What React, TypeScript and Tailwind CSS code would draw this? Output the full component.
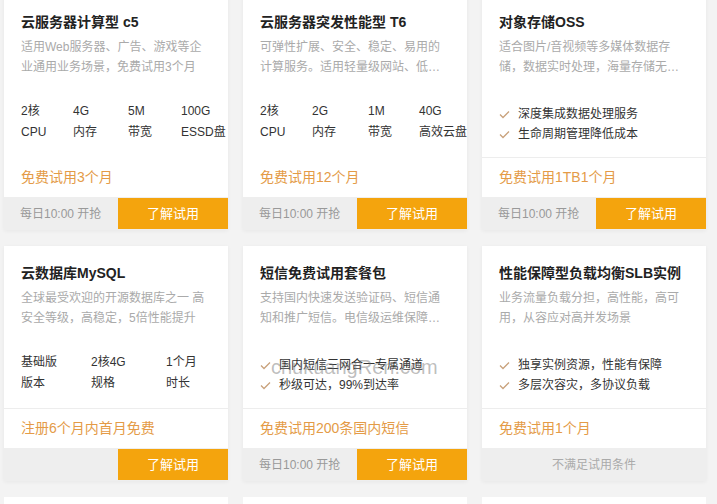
import React from "react";

type Spec = { v: string; l: string; w?: string };
type Card = {
  title: string;
  desc: string;
  specs?: Spec[];
  checks?: string[];
  promo: string;
  divider: boolean;
  footer: "daily" | "button" | "disabled";
};

const cards: Card[] = [
  {
    title: "云服务器计算型 c5",
    desc: "适用Web服务器、广告、游戏等企业通用业务场景，免费试用3个月",
    specs: [
      { v: "2核", l: "CPU", w: "w-[52px]" },
      { v: "4G", l: "内存", w: "w-[55px]" },
      { v: "5M", l: "带宽", w: "w-[53px]" },
      { v: "100G", l: "ESSD盘" },
    ],
    promo: "免费试用3个月",
    divider: false,
    footer: "daily",
  },
  {
    title: "云服务器突发性能型 T6",
    desc: "可弹性扩展、安全、稳定、易用的计算服务。适用轻量级网站、低负载应用场景",
    specs: [
      { v: "2核", l: "CPU", w: "w-[52px]" },
      { v: "2G", l: "内存", w: "w-[56px]" },
      { v: "1M", l: "带宽", w: "w-[51px]" },
      { v: "40G", l: "高效云盘" },
    ],
    promo: "免费试用12个月",
    divider: false,
    footer: "daily",
  },
  {
    title: "对象存储OSS",
    desc: "适合图片/音视频等多媒体数据存储，数据实时处理，海量存储无上限",
    checks: ["深度集成数据处理服务", "生命周期管理降低成本"],
    promo: "免费试用1TB1个月",
    divider: true,
    footer: "daily",
  },
  {
    title: "云数据库MySQL",
    desc: "全球最受欢迎的开源数据库之一 高安全等级，高稳定，5倍性能提升",
    specs: [
      { v: "基础版", l: "版本", w: "w-[70px]" },
      { v: "2核4G", l: "规格", w: "w-[75px]" },
      { v: "1个月", l: "时长" },
    ],
    promo: "注册6个月内首月免费",
    divider: true,
    footer: "button",
  },
  {
    title: "短信免费试用套餐包",
    desc: "支持国内快速发送验证码、短信通知和推广短信。电信级运维保障，实时监控",
    checks: ["国内短信三网合一专属通道", "秒级可达，99%到达率"],
    promo: "免费试用200条国内短信",
    divider: true,
    footer: "daily",
  },
  {
    title: "性能保障型负载均衡SLB实例",
    desc: "业务流量负载分担，高性能，高可用，从容应对高并发场景",
    checks: ["独享实例资源，性能有保障", "多层次容灾，多协议负载"],
    promo: "免费试用1个月",
    divider: true,
    footer: "disabled",
  },
];

function Check() {
  return (
    <svg width="11" height="9" viewBox="0 0 11 9" className="shrink-0">
      <polyline
        points="1,4.5 4,7.5 10,1.5"
        fill="none"
        stroke="#c9a27c"
        strokeWidth="1.3"
      />
    </svg>
  );
}

function CardView({ c }: { c: Card }) {
  return (
    <div className="flex h-[235px] flex-col shadow-[0_1px_4px_rgba(0,0,0,0.05)]">
      <div className="flex-1 bg-white">
        <div className="px-[17px] pt-[17px]">
          <div className="h-[20px] text-[14px] font-bold leading-[20px] text-[#222] whitespace-nowrap">
            {c.title}
          </div>
          <div className="mt-[5px] h-[40px] w-[185px] overflow-hidden text-[12px] leading-[20px] text-[#aaa] line-clamp-2">
            {c.desc}
          </div>
          <div className="mt-[24px] h-[42px]">
            {c.specs && (
              <div className="flex text-[12px] leading-[21px] text-[#333]">
                {c.specs.map((s, i) => (
                  <div key={i} className={s.w ? s.w + " shrink-0" : "flex-1"}>
                    <div className="whitespace-nowrap">{s.v}</div>
                    <div className="whitespace-nowrap">{s.l}</div>
                  </div>
                ))}
              </div>
            )}
            {c.checks && (
              <div className="pt-[3px] text-[12px] leading-[20px] text-[#333]">
                {c.checks.map((t, i) => (
                  <div key={i} className="flex items-center gap-[8px] whitespace-nowrap">
                    <Check />
                    <span>{t}</span>
                  </div>
                ))}
              </div>
            )}
          </div>
        </div>
        <div className={"mt-[14px] h-px " + (c.divider ? "bg-[#ededed]" : "bg-transparent")} />
        <div className="flex h-[39px] items-center px-[17px] text-[14px] text-[#e49b47] whitespace-nowrap">
          {c.promo}
        </div>
      </div>
      <div className="flex h-[33px] items-center bg-[#eeeeee]">
        {c.footer === "disabled" ? (
          <div className="flex-1 text-center text-[12px] text-[#aaa]">不满足试用条件</div>
        ) : (
          <>
            <div className="flex-1 pl-[16px] text-[12px] text-[#999] whitespace-nowrap">
              {c.footer === "daily" ? "每日10:00 开抢" : ""}
            </div>
            <div className="flex h-[31px] w-[110px] items-center justify-center bg-[#f4a40d] text-[13px] text-white">
              了解试用
            </div>
          </>
        )}
      </div>
    </div>
  );
}

export default function App() {
  return (
    <div
      className="relative h-[504px] w-[717px] overflow-hidden bg-[#f3f3f3]"
      style={{ fontFamily: '"Liberation Sans", "Noto Sans CJK SC", sans-serif' }}
    >
      <div className="mt-[-5px] grid grid-cols-[224px_224px_224px] gap-x-[15px] gap-y-[16px] pl-[4px]">
        {cards.map((c, i) => (
          <CardView key={i} c={c} />
        ))}
        <div className="h-[40px] bg-white" />
        <div className="h-[40px] bg-white" />
        <div className="h-[40px] bg-white" />
      </div>
      <div className="pointer-events-none absolute left-[271px] top-[355px] text-[20px] leading-[24px] text-[rgba(110,110,110,0.45)]">
        chukuangRen.com
      </div>
    </div>
  );
}
